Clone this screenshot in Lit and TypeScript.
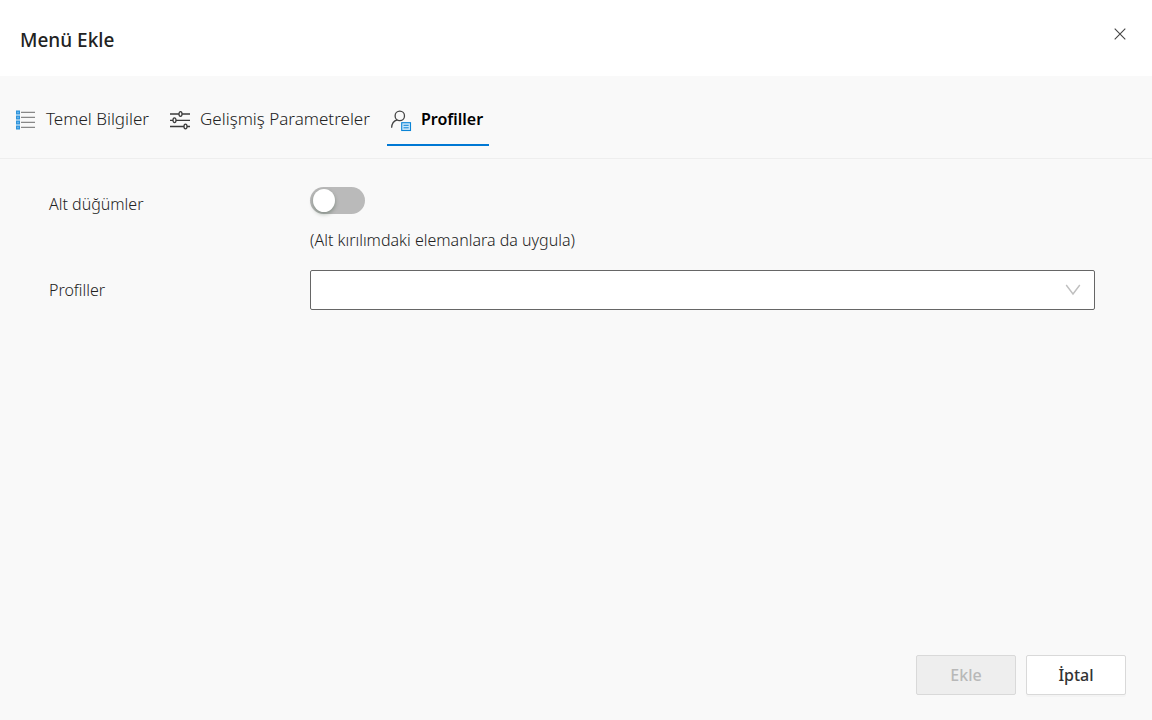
import { LitElement, html, css, svg } from "lit";
import { customElement, state } from "lit/decorators.js";

const listIcon = svg`
  <svg class="icon" viewBox="0 -1 20 20" aria-hidden="true">
    <path d="M5 2.3H19M5 7.3H19M5 12.3H19M5 17.3H19" stroke="#888" stroke-width="1.3" fill="none" />
    <path d="M0 .5h4v4H0zM0 5.5h4v4H0zM0 10.5h4v4H0zM0 15.5h4v4H0z" fill="#2d94dc" />
    <path d="M1.3 1.8h1.4v1.4H1.3zM1.3 6.8h1.4v1.4H1.3zM1.3 11.8h1.4v1.4H1.3zM1.3 16.8h1.4v1.4H1.3z" fill="#7cc3f2" />
  </svg>`;

const slidersIcon = svg`
  <svg class="icon" viewBox="0 -1 20 20" aria-hidden="true">
    <g fill="none" stroke="#3b3b3b" stroke-width="1.3">
      <path d="M0 4H9M12 4H20M0 10.3H3M6 10.3H20M0 16.5H14M17 16.5H20" />
      <ellipse cx="10.5" cy="4" rx="1.5" ry="2.4" />
      <ellipse cx="4.5" cy="10.3" rx="1.5" ry="2.4" />
      <ellipse cx="15.5" cy="16.5" rx="1.5" ry="2.4" />
    </g>
  </svg>`;

const profileIcon = svg`
  <svg class="icon" viewBox="0 -1 20 20" aria-hidden="true">
    <g fill="none" stroke="#444" stroke-width="1.3">
      <circle cx="8.8" cy="5.9" r="4.7" />
      <path d="M.6 17.8C.8 13.6 3 10.6 6.3 9.8" />
    </g>
    <rect x="10.7" y="12.7" width="8.8" height="7.8" fill="#c9e6fa" stroke="#0a84d6" stroke-width="1.1" />
    <path d="M12.5 15.3H17.7M12.5 17.8H17.7" stroke="#0a84d6" stroke-width="1" />
  </svg>`;

@customElement("app-root")
export class AppRoot extends LitElement {
  @state() private active = 2;
  @state() private applyToChildren = false;

  private tabs = [
    { label: "Temel Bilgiler", icon: listIcon },
    { label: "Gelişmiş Parametreler", icon: slidersIcon },
    { label: "Profiller", icon: profileIcon },
  ];

  static styles = css`
    :host {
      display: flex;
      flex-direction: column;
      min-height: 100vh;
      background: #f9f9f9;
      color: #222;
      font-family: "Segoe UI", "Noto Sans", "Open Sans", sans-serif;
      font-size: 16px;
      font-weight: 300;
      line-height: 24px;
    }
    * {
      box-sizing: border-box;
    }
    button,
    select {
      font: inherit;
      color: inherit;
    }
    header {
      display: flex;
      align-items: flex-start;
      justify-content: space-between;
      height: 76px;
      padding: 24px 20px;
      background: #fff;
    }
    h1 {
      margin: 0;
      font-size: 19px;
      font-weight: 500;
      line-height: 32px;
      color: #222;
    }
    .close {
      display: grid;
      place-items: center;
      width: 24px;
      height: 20px;
      padding: 0;
      border: 0;
      background: none;
    }
    .close svg {
      width: 12px;
      height: 12px;
    }
    .tabs {
      display: flex;
      gap: 11px;
      height: 83px;
      padding: 18px 12px 12px;
      border-bottom: 1px solid #eee;
    }
    .tab {
      display: flex;
      align-items: center;
      gap: 10px;
      padding: 0 6px 0 4px;
      border: 0;
      border-bottom: 2px solid transparent;
      background: none;
      font-size: 17px;
      white-space: nowrap;
    }
    .tab.active {
      border-color: #0078d4;
      color: #000;
      font-size: 16px;
      font-weight: 600;
    }
    .icon {
      flex: none;
      width: 20px;
      height: 20px;
      overflow: visible;
    }
    form {
      display: flex;
      flex: 1;
      flex-direction: column;
    }
    .fields {
      display: grid;
      grid-template-columns: 261px 1fr;
      row-gap: 18px;
      padding: 28px 57px 0 49px;
    }
    .label {
      padding-top: 5px;
    }
    .label.tall {
      padding-top: 8px;
    }
    .control {
      display: flex;
      flex-direction: column;
      align-items: flex-start;
      gap: 14px;
    }
    .switch {
      appearance: none;
      width: 55px;
      height: 27px;
      margin: 0;
      padding: 2px 3px;
      border-radius: 14px;
      background: #bababa;
    }
    .switch::before {
      content: "";
      display: block;
      width: 22px;
      height: 23px;
      border-radius: 50%;
      background: #fff;
      box-shadow: 0 2px 4px rgba(0, 35, 11, 0.3);
    }
    .switch:checked {
      background: #0078d4;
    }
    .switch:checked::before {
      margin-left: auto;
    }
    .picker {
      display: grid;
      align-items: center;
    }
    .picker > * {
      grid-area: 1 / 1;
    }
    select {
      appearance: none;
      width: 100%;
      height: 40px;
      padding: 0 40px 0 12px;
      border: 1px solid #666;
      border-radius: 2px;
      background: #fff;
    }
    .chevron {
      justify-self: end;
      width: 16px;
      height: 12px;
      margin-right: 14px;
      pointer-events: none;
    }
    footer {
      display: flex;
      justify-content: flex-end;
      gap: 10px;
      margin-top: auto;
      padding: 24px 26px 25px;
    }
    .button {
      width: 100px;
      height: 40px;
      padding: 0;
      border: 1px solid #d9d9d9;
      border-radius: 2px;
      background: #fff;
      box-shadow: 0 2px 0 rgba(0, 0, 0, 0.02);
      font-size: 16px;
      font-weight: 500;
      color: #333;
    }
    .button:disabled {
      background: #eee;
      box-shadow: none;
      color: #b8b8b8;
    }
  `;

  render() {
    return html`
      <header>
        <h1>Menü Ekle</h1>
        <button class="close" type="button" aria-label="Kapat">
          <svg viewBox="0 0 12 12" aria-hidden="true">
            <path d="M.7 .7 11.3 11.3M11.3 .7 .7 11.3" stroke="#444" stroke-width="1.1" />
          </svg>
        </button>
      </header>
      <div class="tabs" role="tablist">
        ${this.tabs.map(
          (tab, i) => html`<button
            class="tab ${i === this.active ? "active" : ""}"
            type="button"
            role="tab"
            aria-selected=${i === this.active ? "true" : "false"}
            @click=${() => (this.active = i)}
          >
            ${tab.icon}<span>${tab.label}</span>
          </button>`
        )}
      </div>
      <form>
        <div class="fields">
          <label class="label" for="children">Alt düğümler</label>
          <div class="control">
            <input
              id="children"
              class="switch"
              type="checkbox"
              role="switch"
              aria-describedby="hint"
              .checked=${this.applyToChildren}
              @change=${(e: Event) => (this.applyToChildren = (e.target as HTMLInputElement).checked)}
            />
            <span id="hint">(Alt kırılımdaki elemanlara da uygula)</span>
          </div>
          <label class="label tall" for="profiles">Profiller</label>
          <div class="picker">
            <select id="profiles">
              <option value=""></option>
            </select>
            <svg class="chevron" viewBox="0 0 16 12" aria-hidden="true">
              <path d="M1.2 1 8 10 14.8 1" fill="none" stroke="#bfbfbf" stroke-width="1.4" />
            </svg>
          </div>
        </div>
        <footer>
          <button class="button" type="submit" disabled>Ekle</button>
          <button class="button" type="button">İptal</button>
        </footer>
      </form>
    `;
  }
}
